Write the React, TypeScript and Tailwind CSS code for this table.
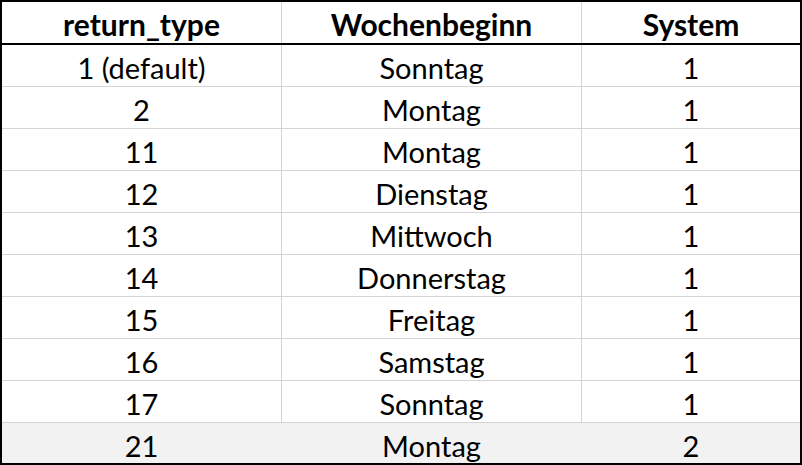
const rows: [string, string, string][] = [
  ['1 (default)', 'Sonntag', '1'],
  ['2', 'Montag', '1'],
  ['11', 'Montag', '1'],
  ['12', 'Dienstag', '1'],
  ['13', 'Mittwoch', '1'],
  ['14', 'Donnerstag', '1'],
  ['15', 'Freitag', '1'],
  ['16', 'Samstag', '1'],
  ['17', 'Sonntag', '1'],
];

const cols = 'grid grid-cols-[279px_1px_299px_1px_1fr]';

export default function App() {
  return (
    <div
      className="w-[802px] h-[465px] border-2 border-black bg-white text-black text-[29px] leading-none flex flex-col"
      style={{ fontFamily: 'Lato, "Open Sans", sans-serif' }}
    >
      <div className={`${cols} h-[41px] font-bold text-[30px]`}>
        <div className="flex items-center justify-center pt-[2px]">return_type</div>
        <div className="bg-[#d4d4d4]" />
        <div className="flex items-center justify-center pt-[2px]">Wochenbeginn</div>
        <div className="bg-[#d4d4d4]" />
        <div className="flex items-center justify-center pt-[2px]">System</div>
      </div>
      <div className="h-[2px] bg-black" />
      {rows.map((r, i) => (
        <div key={i} className={`${cols} h-[42px] border-b border-[#d4d4d4]`}>
          <div className="flex items-center justify-center pt-[4px]">{r[0]}</div>
          <div className="bg-[#d4d4d4]" />
          <div className="flex items-center justify-center pt-[4px]">{r[1]}</div>
          <div className="bg-[#d4d4d4]" />
          <div className="flex items-center justify-center pt-[4px]">{r[2]}</div>
        </div>
      ))}
      <div className={`${cols} flex-1 bg-[#f2f2f2]`}>
        <div className="flex items-center justify-center pt-[4px]">21</div>
        <div />
        <div className="flex items-center justify-center pt-[4px]">Montag</div>
        <div />
        <div className="flex items-center justify-center pt-[4px]">2</div>
      </div>
    </div>
  );
}
